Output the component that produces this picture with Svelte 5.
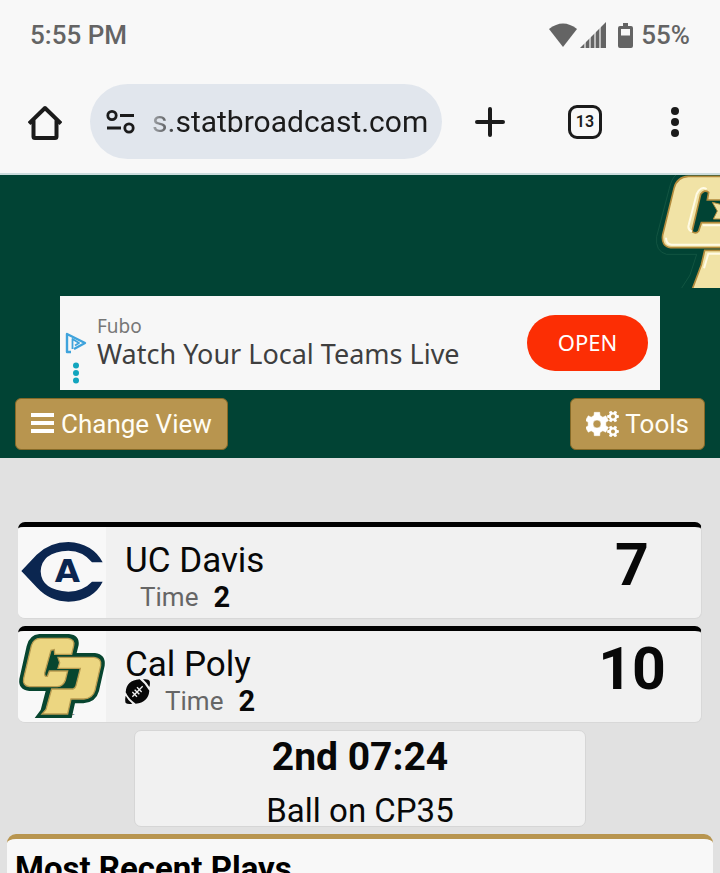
<script>
  let address = $state('s.statbroadcast.com');

  const teams = [
    { id: 'ucd', name: 'UC Davis', timeouts: 2, score: 7, ball: false },
    { id: 'cp', name: 'Cal Poly', timeouts: 2, score: 10, ball: true }
  ];

  // Outline of a cog with six square teeth
  function cog(cx, cy, outer, inner, turn) {
    const points = [];
    for (let i = 0; i < 6; i++) {
      const a = turn + (i * Math.PI) / 3;
      for (const [r, d] of [[inner, -0.34], [outer, -0.23], [outer, 0.23], [inner, 0.34]]) {
        points.push(`${(cx + r * Math.cos(a + d)).toFixed(2)} ${(cy + r * Math.sin(a + d)).toFixed(2)}`);
      }
    }
    return `M${points.join('L')}Z`;
  }
  const hole = (cx, cy, r) => `M${cx - r} ${cy}a${r} ${r} 0 1 0 ${2 * r} 0a${r} ${r} 0 1 0 ${-2 * r} 0Z`;
</script>

<div class="screen">
  <div class="status">
    <span>5:55 PM</span>
    <div class="signals">
      <svg width="28" height="24" viewBox="0 0 28 24" aria-hidden="true"><path d="M0 6Q14-5 28 6L14 24Z" /></svg>
      <svg class="cell" width="26" height="26" viewBox="0 0 26 26" aria-hidden="true">
        <path d="M0 26L26 0V26Z" /><path d="M5 18V26M10 12V26M15 7V26M20 3V26" stroke="#f8f8f8" stroke-width="1.2" />
      </svg>
      <svg width="15" height="25" viewBox="0 0 15 25" aria-hidden="true">
        <path fill-rule="evenodd" d="M5 0H10V3H13Q15 3 15 5V23Q15 25 13 25H2Q0 25 0 23V5Q0 3 2 3H5ZM3 6V12.500H12V6Z" />
      </svg>
      <span>55%</span>
    </div>
  </div>

  <div class="browser">
    <button class="plain home" aria-label="Home">
      <svg width="34" height="36" viewBox="0 0 34 36" fill="none" stroke="#1b1b1b" stroke-width="4" stroke-linejoin="round">
        <path d="M1 19.500L17 4L33 19.500M5.500 16V32.500Q5.500 34 7 34H27Q28.500 34 28.500 32.500V16" />
      </svg>
    </button>
    <div class="address">
      <svg width="30" height="26" viewBox="0 0 30 26" fill="none" stroke="#1b1b1b" stroke-width="2.800" aria-hidden="true">
        <circle cx="6" cy="6.500" r="4.200" /><path d="M14 6.500H28M1 19H15" /><circle cx="23" cy="19" r="4.200" />
      </svg>
      <input aria-label="Address" bind:value={address} />
    </div>
    <button class="plain add" aria-label="New tab">
      <svg width="32" height="32" viewBox="0 0 32 32" stroke="#1b1b1b" stroke-width="4" stroke-linecap="round"><path d="M3 16H29M16 3V29" /></svg>
    </button>
    <button class="plain tabs" aria-label="13 open tabs"><span>13</span></button>
    <button class="plain more" aria-label="More">
      <svg width="10" height="32" viewBox="0 0 10 32" fill="#1b1b1b"><circle cx="5" cy="5" r="4" /><circle cx="5" cy="16" r="4" /><circle cx="5" cy="27" r="4" /></svg>
    </button>
  </div>

  <header>
    <div class="brand">
      <svg width="66" height="113" viewBox="42 30 198 339" aria-label="Cal Poly">
        <path d="M108 30Q95 40 88 70L50 215Q45 260 80 268H170L150 330L125 369" fill="none" stroke="#1b5d49" stroke-width="2" />
        <g fill="#f1e3a6" stroke="#b38b3c" stroke-width="5">
          <path d="M250 34H145Q110 36 102 70L68 210Q63 244 92 248H250V173H184L176 198Q168 208 156 200L182 88Q193 72 206 82L202 105H250Z" />
          <path d="M250 256H194L184 300L154 380H250Z" />
          <path d="M217 112L250 120V162H220L232 138Z" stroke-width="3" />
        </g>
        <path d="M240 239H95Q78 238 78 218M156 200Q142 194 146 180L170 87Q182 62 200 72M240 181H188M240 266H205L192 310" fill="none" stroke="#fffbe5" stroke-width="6" />
      </svg>
    </div>
    <section class="ad" aria-label="Advertisement">
      <div class="choices">
        <svg width="22" height="22" viewBox="0 0 22 22" fill="none" stroke="#3fa3dc" stroke-width="2.400" stroke-linejoin="round" aria-hidden="true">
          <path d="M6 20L2 20V2L20 11L9 17" /><path d="M7.500 17V7L14 11L10 13.500" stroke-width="1.800" />
        </svg>
        <svg width="8" height="22" viewBox="0 0 8 22" fill="#12a5be" aria-hidden="true"><circle cx="4" cy="3.500" r="3" /><circle cx="4" cy="11" r="3" /><circle cx="4" cy="18.500" r="3" /></svg>
      </div>
      <div class="pitch">
        <span class="sponsor">Fubo</span>
        <span class="line">Watch Your Local Teams Live</span>
      </div>
      <button class="open">OPEN</button>
    </section>
    <nav>
      <button class="gold">
        <svg width="24" height="22" viewBox="0 0 24 22" fill="#fff" aria-hidden="true"><path d="M0 0H23V4H0ZM0 8H23V12H0ZM0 16H23V20H0Z" /></svg>
        Change View
      </button>
      <button class="gold">
        <svg width="33" height="26" viewBox="0 0 33 26" fill="#fff" fill-rule="evenodd" aria-hidden="true">
          <path d={cog(11, 13, 12, 9, Math.PI / 6) + hole(11, 13, 4)} stroke="#fff" stroke-linejoin="round" stroke-width=".5" />
          <path d={cog(27, 5.5, 6, 4.3, 0) + hole(27, 5.5, 2)} />
          <path d={cog(27, 20.5, 6, 4.3, 0) + hole(27, 20.5, 2)} />
        </svg>
        Tools
      </button>
    </nav>
  </header>

  <main>
    {#each teams as team (team.id)}
      <article class="team">
        <div class="logo">
          {#if team.id === 'ucd'}
            <svg viewBox="54 51 264 273" fill="#0b2650" aria-label="UC Davis">
              <path d="M64 183L110 134Q150 96 205 96Q278 100 308 157H276Q250 123 205 122Q124 126 122 184Q124 241 205 245Q250 243 276 215H308Q280 272 205 275Q150 275 110 232Z" />
              <text x="202" y="216" text-anchor="middle">A</text>
            </svg>
          {:else}
            <svg viewBox="54 48 264 273" aria-label="Cal Poly">
              <path fill="#07452f" d="M118 57H207Q239 60 236 90L230 114H285Q318 118 314 152L297 228Q288 262 250 265H225L215 309H104L122 285L137 228H88Q54 224 58 192L80 93Q88 59 118 57Z" />
              <g fill="#ecd681" stroke="#b89b50" stroke-width="4">
                <path d="M121 70H204Q225 73 221 92L215 118H164L163 104L153 106L134 174Q133 186 142 184L148 168H203L196 196Q190 214 172 215H88Q67 212 71 190L94 92Q100 71 121 70Z" />
                <path d="M174 127H282Q306 130 302 152L285 226Q278 250 252 252H213L203 297H126L138 283L155 222H219Q226 220 228 212L241 160H174L179 143Z" />
              </g>
              <text class="tm" x="220" y="305" text-anchor="middle">™</text>
            </svg>
          {/if}
        </div>
        <div class="info">
          <h2>{team.name}</h2>
          <div class="time" class:has-ball={team.ball}>
            {#if team.ball}
              <svg class="ball" width="25" height="25" viewBox="0 0 75 75" aria-label="Possession">
                <path fill="#080808" d="M54 1Q71-1 74 6Q76 15 73 24Q64 10 54 1ZM2 50Q10 65 22 74Q8 76 2 72Q-1 64 2 50ZM2 40Q4 4 44 1Q62 15 73 35Q70 70 32 74Q12 61 2 40Z" />
                <path fill="none" stroke="#f1f1f1" stroke-width="4" d="M22 53L53 22M22 39L36 53M29 32L43 46M36 25L50 39" />
              </svg>
            {/if}
            <span>Time</span><b>{team.timeouts}</b>
          </div>
        </div>
        <strong class="score">{team.score}</strong>
      </article>
    {/each}

    <section class="clock">
      <strong>2nd 07:24</strong>
      <span>Ball on CP35</span>
    </section>

    <section class="plays"><h2>Most Recent Plays</h2></section>
  </main>
</div>

<style>
  :global(body) { background: #e1e1e1; }
  .screen {
    display: flex; flex-direction: column; height: 100vh; overflow: hidden;
    font-family: Roboto, "Liberation Sans", sans-serif; color: #080808; background: #e1e1e1;
  }
  .screen * { box-sizing: border-box; }
  svg { display: block; flex: none; }
  h2 { margin: 0; font-weight: 400; }
  button { font-family: inherit; cursor: pointer; }

  .status {
    display: flex; flex: none; align-items: center; justify-content: space-between;
    height: 70px; padding: 0 30px; background: #f8f8f8; color: #646464; font-size: 26px; font-weight: 500;
  }
  .signals { display: flex; align-items: center; gap: 12px; fill: #646464; }
  .cell { margin-left: -9px; }
  .signals span { margin-left: -4px; }

  .browser {
    display: flex; flex: none; align-items: center; height: 105px; padding: 0 40px 0 28px;
    background: #f8f8f8; border-bottom: 2px solid #cbdcdd;
  }
  .plain { display: flex; align-items: center; justify-content: center; padding: 0; border: 0; background: none; }
  .address {
    display: flex; flex: 1; align-items: center; gap: 16px; min-width: 0; height: 75px; margin: 0 32px 0 28px;
    padding: 0 15px 0 16px; border-radius: 38px; background: #e1e6ed;
  }
  .address input {
    flex: 1; width: 0; min-width: 0; padding: 0; border: 0; outline: 0; background: none; text-align: right;
    font-family: inherit; font-size: 30px; color: #1b1b1b;
    mask-image: linear-gradient(to right, rgba(0, 0, 0, .3), #000 28px);
  }
  .add { margin-right: 62px; }
  .tabs { width: 34px; height: 34px; margin-right: 68px; border: 3px solid #1b1b1b; border-radius: 9px; color: #1b1b1b; font-size: 16px; font-weight: 600; }

  header { flex: none; height: 283px; background: #014334; }
  .brand { display: flex; justify-content: flex-end; height: 121px; overflow: hidden; }
  .ad { display: flex; align-items: center; height: 94px; margin: 0 60px; padding: 0 12px 0 5px; background: #f7f7f7; font-family: "Noto Sans", sans-serif; }
  .choices { display: flex; flex-direction: column; align-items: center; gap: 8px; padding-top: 30px; width: 22px; }
  .pitch { display: flex; flex: 1; flex-direction: column; margin-left: 10px; }
  .sponsor { font-size: 19px; line-height: 22px; color: #777; }
  .line { font-size: 27px; line-height: 34px; color: #3f3f3f; white-space: nowrap; }
  .open { width: 121px; height: 56px; padding: 0 0 2px; border: 0; border-radius: 28px; background: #fc2e04; color: #fff; font-size: 22px; }
  nav { display: flex; justify-content: space-between; padding: 8px 15px; }
  .gold {
    display: flex; align-items: center; gap: 6px; height: 52px; padding: 0 15px; border: 1px solid #856927; border-radius: 6px;
    background: #b8954f; color: #fffdf5; font-size: 26px;
  }

  main { padding: 64px 7px 0; }
  .team {
    display: flex; height: 97px; margin: 0 11px 7px; border: 1px solid #d8d8d8; border-top: 5px solid #000; border-left: 0;
    border-radius: 7px; background: #f1f1f1; overflow: hidden;
  }
  .logo { width: 88px; background: #f8f8f8; }
  .logo text { font: 700 98px "DejaVu Sans", sans-serif; }
  .logo .tm { font: 12px Roboto, sans-serif; }
  .info { flex: 1; padding: 12px 0 0 19px; }
  .info h2 { font-size: 35px; line-height: 43px; }
  .time { position: relative; display: flex; align-items: center; gap: 15px; padding-left: 15px; line-height: 30px; }
  .has-ball { padding-left: 40px; }
  .time span { color: #666; font-size: 26px; }
  .time b { font-size: 29px; }
  .ball { position: absolute; left: 0; top: -7px; }
  .score { width: 138px; padding-top: 3px; font-size: 59px; line-height: 70px; text-align: center; }

  .clock {
    display: flex; flex-direction: column; align-items: center; height: 97px; margin: 0 127px 7px;
    border: 1px solid #d6d6d6; border-radius: 7px; background: #f1f1f1; white-space: nowrap;
  }
  .clock strong { font-size: 39px; line-height: 52px; }
  .clock span { font-size: 33px; line-height: 56px; }
  .plays { height: 97px; padding: 10px 8px; border-top: 5px solid #b8954f; border-radius: 9px 9px 0 0; background: #f8f8f8; }
  .plays h2 { font-size: 33px; line-height: 40px; font-weight: 700; color: #000; }
</style>
